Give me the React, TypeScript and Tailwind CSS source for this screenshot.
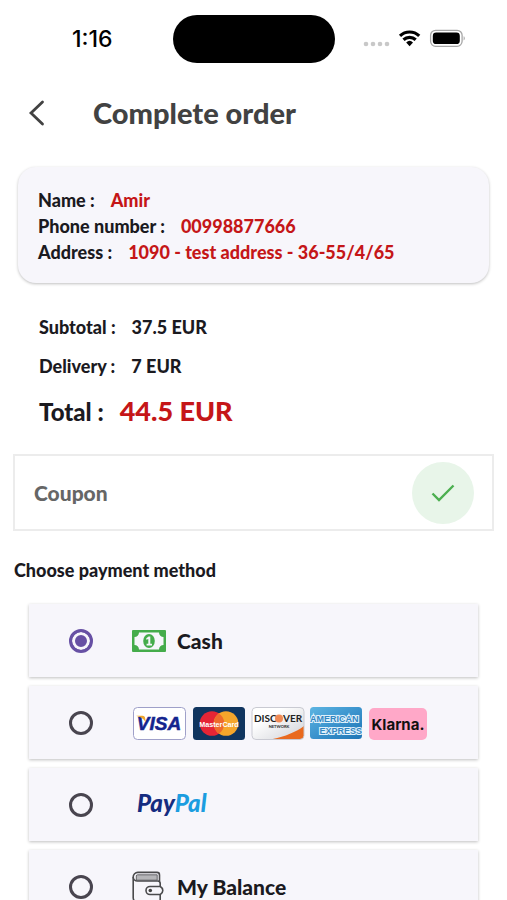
import { useState, type ReactNode } from 'react';

const customer = [
    { label: 'Name :', value: 'Amir' },
    { label: 'Phone number :', value: '00998877666' },
    { label: 'Address :', value: '1090 - test address - 36-55/4/65' },
];

function StatusBar() {
    return (
        <div className="grid grid-cols-[1fr_162px_1fr] items-center pt-[15px]">
            <span className="pl-[72px] font-['Inter',sans-serif] text-[23px] leading-6 font-medium text-black">1:16</span>
            <div className="h-12 rounded-full bg-black"></div>
            <div className="flex items-center justify-end pr-[42px]">
                <svg viewBox="0 0 104 24" className="h-6 w-[104px]" aria-hidden="true">
                    <g fill="#c8c8c8">
                        <circle cx="5" cy="17" r="2.3" />
                        <circle cx="12" cy="17" r="2.3" />
                        <circle cx="19" cy="17" r="2.3" />
                        <circle cx="26" cy="17" r="2.3" />
                    </g>
                    <g fill="none" stroke="#000" strokeWidth="3.2">
                        <path d="M39 8.800a14 14 0 0 1 19.200 0" />
                        <path d="M42.500 12.700a9 9 0 0 1 12.200 0" />
                    </g>
                    <path d="M45.200 15.400a5 5 0 0 1 6.800 0L48.600 19.200z" fill="#000" />
                    <rect x="69.600" y="3.300" width="31.500" height="16" rx="5" fill="#fff" stroke="#a6a6a6" strokeWidth="1.300" />
                    <rect x="71.800" y="5.500" width="27" height="11.600" rx="3.400" fill="#000" />
                    <path d="M102.600 9.200c1.600 .6 1.600 3.600 0 4.200z" fill="#a6a6a6" />
                </svg>
            </div>
        </div>
    );
}

function CashIcon() {
    return (
        <svg viewBox="0 0 34 22" className="h-[22px] w-[34px]" aria-hidden="true">
            <rect width="34" height="22" rx="1" fill="#45ac4b" />
            <path d="M7 2.500h20a4.500 4.500 0 0 0 4.500 4.500v8a4.500 4.500 0 0 0-4.500 4.500H7a4.500 4.500 0 0 0-4.500-4.500V7A4.500 4.500 0 0 0 7 2.500z" fill="#f7f6fb" />
            <ellipse cx="17" cy="11" rx="5.800" ry="7" fill="#45ac4b" />
            <path d="M14.300 8.200l2.300-1.700h1.700v7.200h1.700v1.800h-5.400v-1.800h1.700V9l-2 .8z" fill="#f7f6fb" />
        </svg>
    );
}

function WalletIcon() {
    return (
        <svg viewBox="0 0 32 32" className="h-8 w-8" fill="none" stroke="#4a4a4c" strokeWidth="1.600" strokeLinejoin="round" aria-hidden="true">
            <path d="M1.200 6v21a4 4 0 0 0 4 4h20.500a2.500 2.500 0 0 0 2.500-2.500V24" />
            <path d="M28.200 16v-3.500a2.500 2.500 0 0 0-2.500-2.500H5.500A4.200 4.200 0 0 1 1.200 6a4.600 4.600 0 0 1 4.600-4.600H25a2.500 2.500 0 0 1 2.500 2.500v6.600" />
            <path d="M5.500 3.800h19.700v5.400H4.300V5a1.200 1.200 0 0 1 1.200-1.200z" fill="#b5b5b8" strokeWidth=".8" />
            <path d="M28.300 15.500H18a4 4 0 0 0 0 8h10.300c1.700-1 2.500-2.200 2.500-4s-.8-3-2.500-4z" fill="#f7f6fb" />
            <circle cx="18.300" cy="19.500" r="1.800" fill="#444" stroke="none" />
        </svg>
    );
}

function CardLogos() {
    return (
        <svg viewBox="0 0 295 34" className="h-[34px] w-[295px]" role="img" aria-label="Visa, MasterCard, Discover, American Express, Klarna">
            <defs>
                <linearGradient id="discover" x1="0" y1="0" x2="1" y2="1">
                    <stop offset=".3" stopColor="#fff" />
                    <stop offset="1" stopColor="#cfd1d6" />
                </linearGradient>
                <linearGradient id="amex" x1="0" y1="0" x2="1" y2="1">
                    <stop offset="0" stopColor="#5db5e2" />
                    <stop offset=".5" stopColor="#3b93cd" />
                    <stop offset="1" stopColor="#1e75b5" />
                </linearGradient>
                <clipPath id="discoverClip"><rect x="120" y="1" width="52" height="32" rx="4" /></clipPath>
                <clipPath id="amexClip"><rect x="178" y="1" width="52" height="32" rx="3.500" /></clipPath>
            </defs>

            <rect x="1.500" y="1.500" width="52" height="32" rx="4" fill="#fff" stroke="#9fa0c9" />
            <text x="27" y="24" textAnchor="middle" fontFamily="Liberation Sans, sans-serif" fontWeight="700" fontStyle="italic" fontSize="19" fill="#14248e" stroke="#14248e" strokeWidth=".5">VISA</text>
            <path d="M4.500 9.700h6c1.700 0 2.500 1 2.700 2.500l.5 4C11.500 12.700 8.500 10.800 4.500 10.100z" fill="#f0a52b" />

            <rect x="61" y="1" width="52" height="33" rx="3.500" fill="#10355f" />
            <circle cx="80" cy="17.500" r="12.300" fill="#e52535" />
            <circle cx="94" cy="17.500" r="12.300" fill="#f5a62b" />
            <path d="M87 7.400a12.300 12.300 0 0 1 0 20.200a12.300 12.300 0 0 1 0-20.200z" fill="#ee6b2b" />
            <text x="87" y="20.500" textAnchor="middle" fontFamily="Liberation Sans, sans-serif" fontWeight="700" fontSize="7.200" fill="#fff">MasterCard</text>

            <g clipPath="url(#discoverClip)">
                <rect x="120" y="1" width="52" height="32" fill="url(#discover)" />
                <path d="M135 34c14-2 28-7 37-14v14z" fill="#e96a1f" />
            </g>
            <rect x="120" y="1.500" width="52" height="32" rx="4" fill="none" stroke="#c9cad2" />
            <text y="16" fontFamily="Lato, sans-serif" fontWeight="700" fontSize="10" fill="#222">
                <tspan x="122">DISC</tspan>
                <tspan x="151">VER</tspan>
            </text>
            <circle cx="147" cy="12.500" r="4" fill="#f08a55" />
            <text x="147" y="21.500" textAnchor="middle" fontFamily="Lato, sans-serif" fontSize="4" fill="#333">NETWORK</text>

            <g clipPath="url(#amexClip)">
                <rect x="178" y="1" width="52" height="32" fill="url(#amex)" />
                <g fontFamily="Liberation Sans, sans-serif" fontWeight="700" fontSize="9" fill="#3286c2" stroke="#dff0fb" strokeWidth="2.200" paintOrder="stroke">
                    <text x="178" y="16">AMERICAN</text>
                    <text x="230" y="27.500" textAnchor="end">EXPRESS</text>
                </g>
            </g>

            <rect x="237" y="2" width="58" height="32" rx="5" fill="#ffa8c8" />
            <text x="266" y="24" textAnchor="middle" fontFamily="Inter, sans-serif" fontWeight="700" fontSize="15" fill="#111">Klarna.</text>
        </svg>
    );
}

function PayPalLogo() {
    return (
        <span className="pb-[3px] pl-[5px] text-[24px] leading-7 text-[#152c80] italic">
            Pay<span className="text-[#1b9de0]">Pal</span>
        </span>
    );
}

const methods: { id: string; name: string; content: ReactNode }[] = [
    {
        id: 'cash',
        name: 'Cash',
        content: (
            <>
                <CashIcon />
                <span className="ml-[11px]">Cash</span>
            </>
        ),
    },
    { id: 'card', name: 'Card or Klarna', content: <CardLogos /> },
    { id: 'paypal', name: 'PayPal', content: <PayPalLogo /> },
    {
        id: 'balance',
        name: 'My Balance',
        content: (
            <>
                <WalletIcon />
                <span className="ml-[13px]">My Balance</span>
            </>
        ),
    },
];

function App() {
    const [method, setMethod] = useState('cash');
    const [coupon, setCoupon] = useState('');

    return (
        <div className="min-h-screen bg-white font-['Lato',sans-serif] font-black text-[#1b1a1f]">
            <StatusBar />

            <header className="flex h-[104px] items-center pb-1 pl-[28px]">
                <button type="button" aria-label="Back" className="mr-[45px]">
                    <svg viewBox="0 0 20 28" className="h-7 w-5" fill="none" stroke="#424242" strokeWidth="2.800" strokeLinecap="round">
                        <path d="M14.500 3L3 14L14.500 25" />
                    </svg>
                </button>
                <h1 className="text-[29px] leading-8 text-[#424242]">Complete order</h1>
            </header>

            <main>
                <section className="mx-[18px] rounded-[18px] bg-[#f7f6fb] px-5 pt-5 pb-[18px] shadow-[0_1px_3px_rgba(0,0,0,0.25)]">
                    {customer.map((row) => (
                        <p key={row.label} className="text-[18px] leading-[26px]">
                            {row.label}
                            <span className="ml-4 text-[#c51618]">{row.value}</span>
                        </p>
                    ))}
                </section>

                <section className="px-[39px] pt-[25px] text-[18px]">
                    <p className="leading-[39px]">Subtotal :<span className="ml-4">37.5 EUR</span></p>
                    <p className="leading-[39px]">Delivery :<span className="ml-4">7 EUR</span></p>
                    <p className="text-[24px] leading-[50px]">
                        Total :<span className="ml-4 text-[27px] text-[#c51618]">44.5 EUR</span>
                    </p>
                </section>

                <form onSubmit={(e) => e.preventDefault()} className="mx-[13px] mt-[17px] flex h-[77px] items-center justify-between border-2 border-[#ececec] pr-[18px] pl-[19px]">
                    <input
                        type="text"
                        aria-label="Coupon"
                        placeholder="Coupon"
                        value={coupon}
                        onChange={(e) => setCoupon(e.target.value)}
                        className="min-w-0 flex-1 text-[21px] leading-8 outline-none placeholder:text-[#666]"
                    />
                    <button type="submit" aria-label="Apply coupon" className="flex size-[62px] items-center justify-center rounded-full bg-[#e8f5e9]">
                        <svg viewBox="0 0 24 20" className="h-5 w-6" fill="none" stroke="#4caf50" strokeWidth="2.400">
                            <path d="M1.500 10.500L8 17L22.500 2.500" />
                        </svg>
                    </button>
                </form>

                <fieldset>
                    <legend className="px-[14px] pt-[26px] pb-[21px] text-[18px] leading-[26px]">Choose payment method</legend>
                    <div className="flex flex-col gap-[9px] px-[29px] pb-6">
                        {methods.map(({ id, name, content }) => (
                            <label key={id} className="flex h-[73px] items-center bg-[#f7f6fb] pl-10 text-[21px] shadow-[0_1px_3px_rgba(0,0,0,0.25)]">
                                <input
                                    type="radio"
                                    name="method"
                                    aria-label={name}
                                    checked={method === id}
                                    onChange={() => setMethod(id)}
                                    className="mr-[39px] size-6 shrink-0 appearance-none rounded-full border-[3px] border-[#49454f] checked:border-[#6750a4] checked:bg-[#6750a4] checked:shadow-[inset_0_0_0_3px_#f7f6fb]"
                                />
                                {content}
                            </label>
                        ))}
                    </div>
                </fieldset>
            </main>
        </div>
    );
}

export default App;
